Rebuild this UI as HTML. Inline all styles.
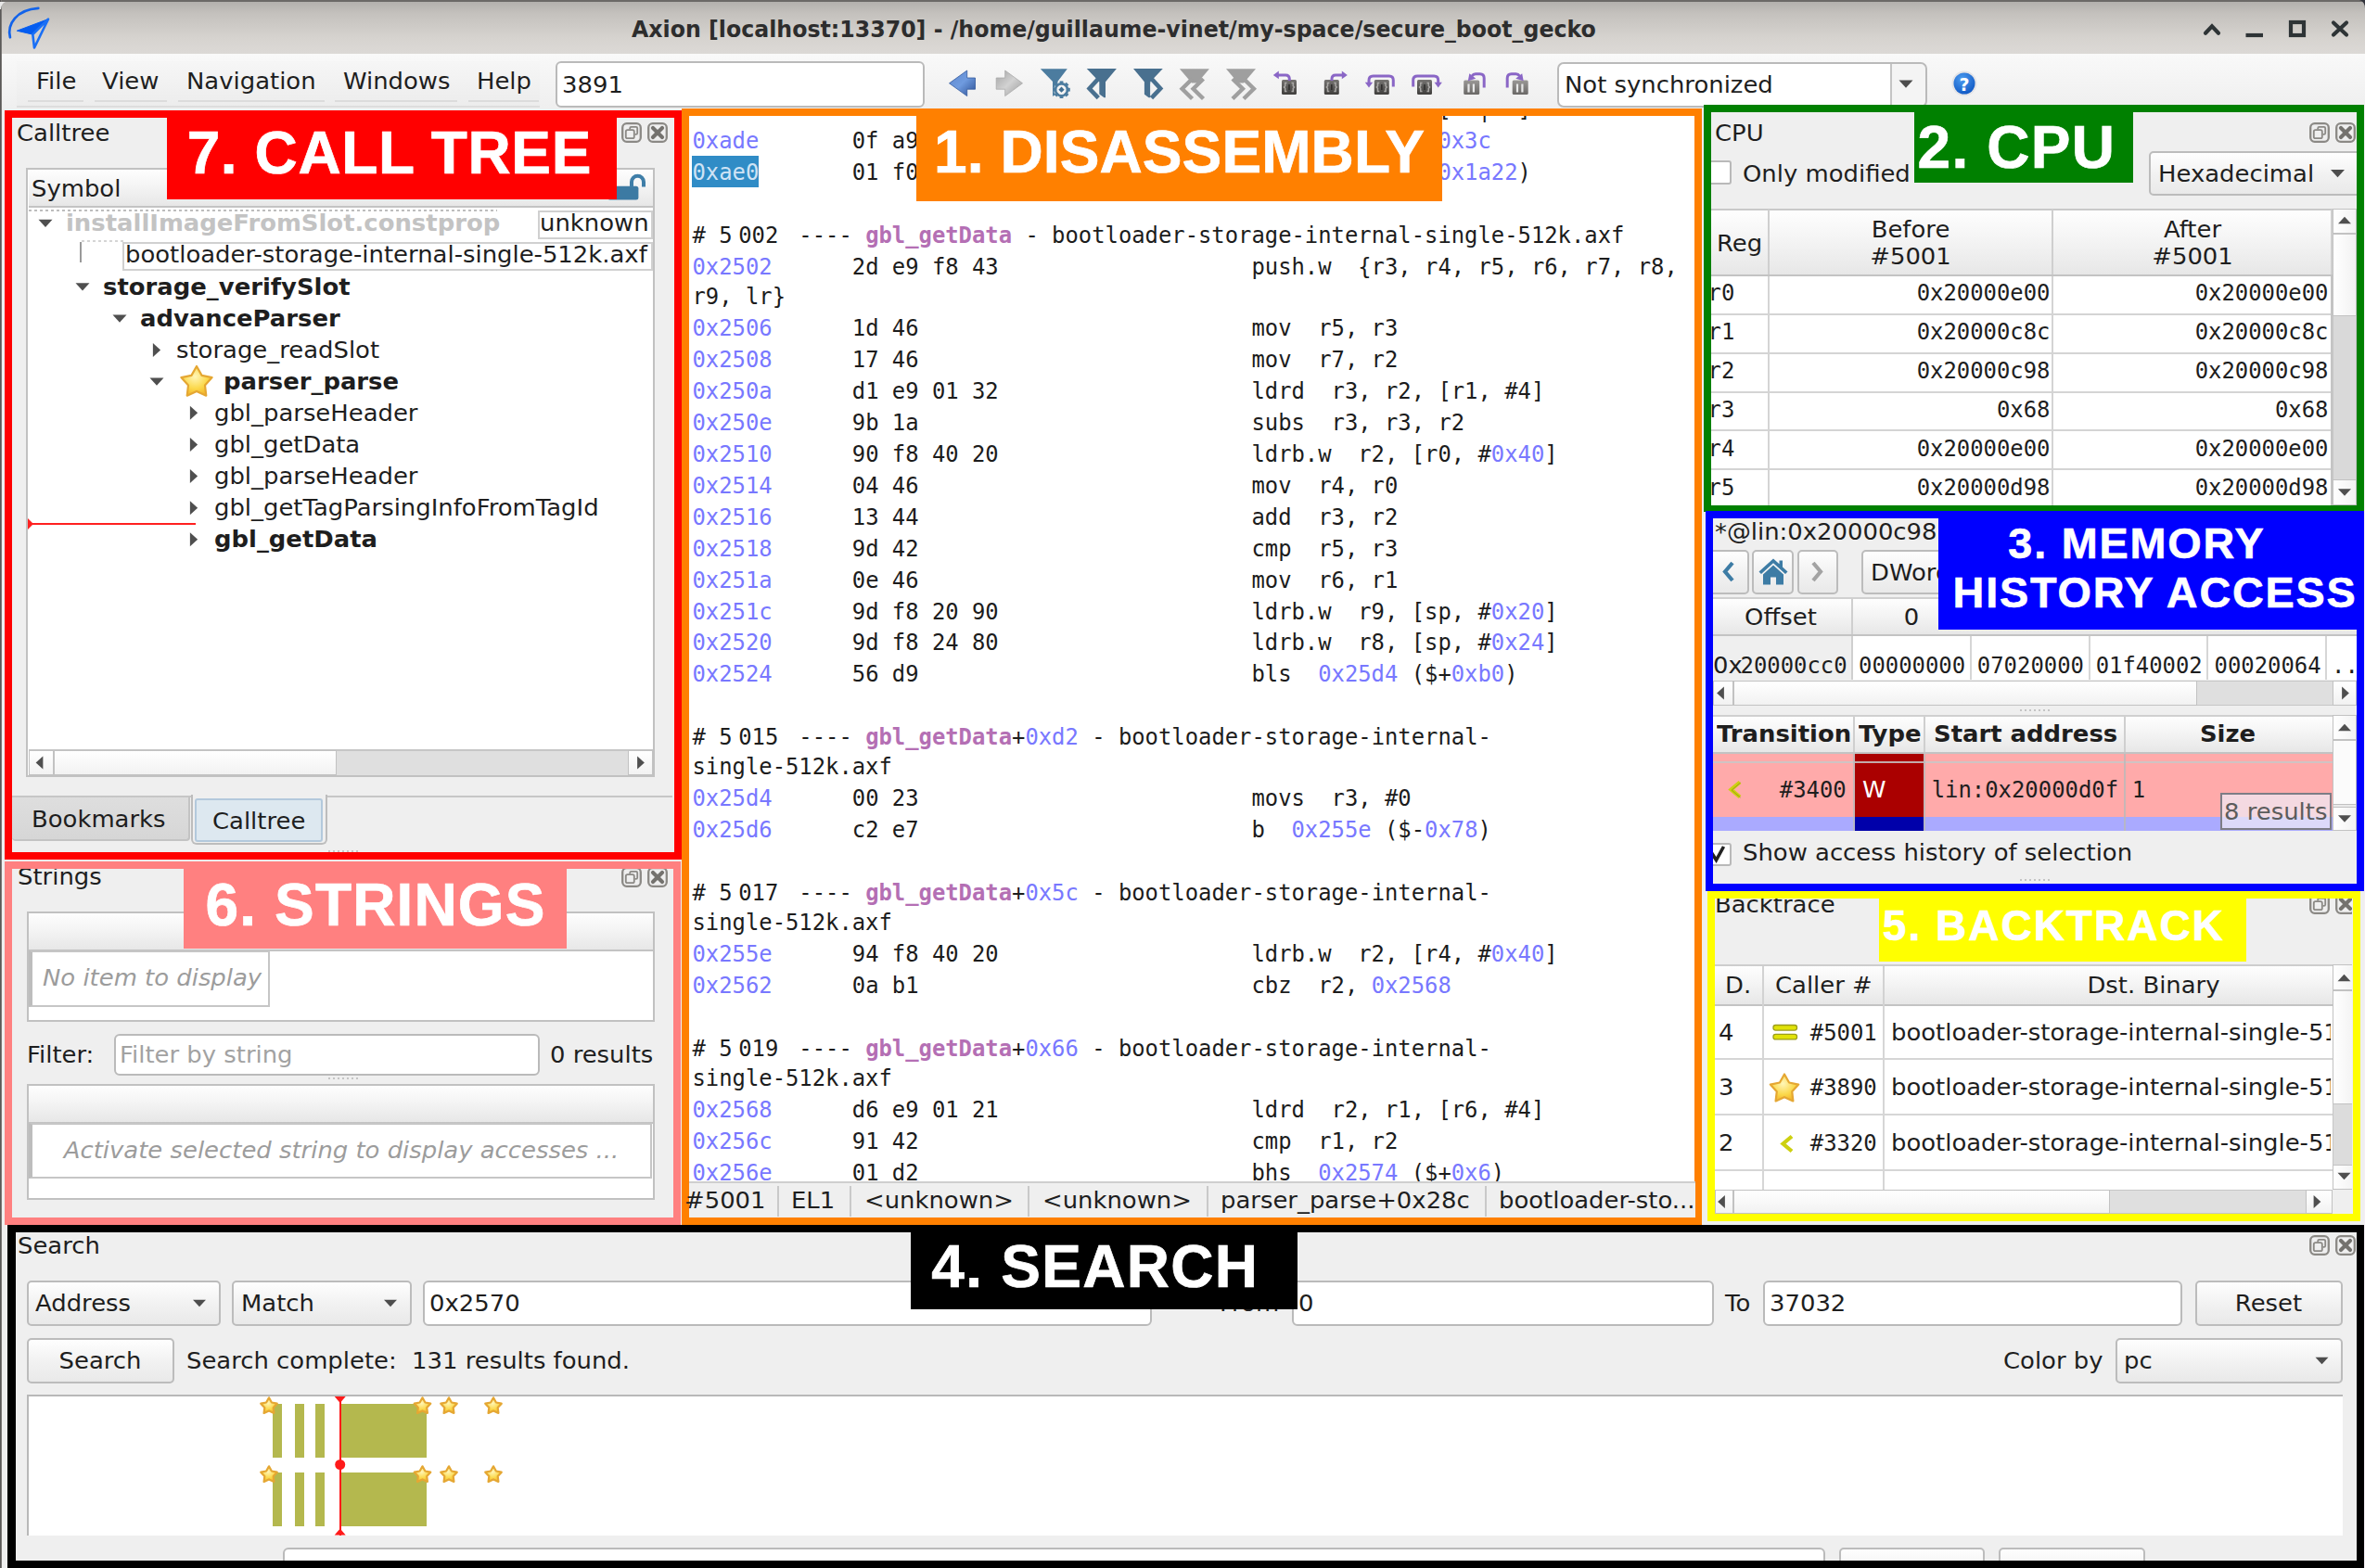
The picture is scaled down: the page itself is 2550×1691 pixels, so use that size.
<!DOCTYPE html><html><head><meta charset="utf-8"><title>Axion</title><style>
*{box-sizing:border-box;margin:0;padding:0}
html,body{width:2550px;height:1691px;overflow:hidden;background:#efefef}
body{position:relative;font-family:"DejaVu Sans","Liberation Sans",sans-serif;font-size:24px;color:#1e1e1e;line-height:1}
.a{position:absolute}
.t{position:absolute;white-space:pre;line-height:30px;height:30px;transform:scaleX(1.078);transform-origin:0 50%}
.t.r{transform-origin:100% 50%;text-align:right}
.t.c{transform-origin:50% 50%;text-align:center}
.m{font-family:"DejaVu Sans Mono","Liberation Mono",monospace;transform:scaleY(1.05);transform-origin:0 78%}
.b{font-weight:bold}
.i{font-style:italic}
.lbl{position:absolute;color:#fff;font-family:"Liberation Sans","DejaVu Sans",sans-serif;font-weight:bold;white-space:pre;text-align:center;overflow:hidden}
.lbl span{display:inline-block;transform-origin:50% 50%}
.hdr{position:absolute;background:linear-gradient(#fefefe,#f3f3f3 50%,#e7e7e7);border-bottom:2px solid #c3c3c3}
.btn{position:absolute;border:2px solid #bcbcbc;border-radius:5px;background:linear-gradient(#fefefe,#f1f1f1 55%,#e9e9e9)}
.inp{position:absolute;border:2px solid #bababa;border-radius:6px;background:#fff}
.frame{position:absolute;border:2px solid #c1c1c1;background:#fff}
.sbt{position:absolute;background:#dfdfdf;border:1px solid #c6c6c6}
.sbh{position:absolute;background:linear-gradient(#ffffff,#f2f2f2);border:1px solid #c2c2c2}
.sbv{position:absolute;background:linear-gradient(90deg,#ffffff,#f2f2f2);border:1px solid #c2c2c2}
.dk{position:absolute;width:22px;height:22px}
.clip{position:absolute;overflow:hidden}
.dis{position:absolute;left:746.5px;white-space:pre;transform:scaleY(1.05);transform-origin:0 25.11px;font-family:"DejaVu Sans Mono","Liberation Mono",monospace;font-size:23.85px;line-height:33.72px;height:33.72px;color:#1c1c1c}
.dis i{font-style:normal;color:#7878ff}
.dis u{text-decoration:none;color:#b46fb4;font-weight:bold}
.vl{position:absolute;width:2px;background:#d0d0d0}
.hl{position:absolute;height:2px;background:#d0d0d0}
</style></head><body>
<div class="a" style="left:0px;top:0px;width:2550px;height:58px;background:linear-gradient(#b0aeab,#c4c1bd 25%,#d6d3cf 70%,#dcd9d6);"></div>
<div class="a" style="left:0px;top:0px;width:2550px;height:2px;background:#6b6967"></div>
<div class="a" style="left:0px;top:0px;width:2px;height:1691px;background:linear-gradient(90deg,#4a4948,#8a8784)"></div>
<div class="a" style="left:2px;top:58px;width:2548px;height:58px;background:linear-gradient(#f9f9f9,#efefef)"></div>
<svg class="a" style="left:0px;top:0px" width="60" height="58" viewBox="0 0 60 58"><path d="M10.900 40.300 C7.500 26 17.500 10.500 41.300 8.900" fill="none" stroke="#1263ea" stroke-width="2.700" stroke-linecap="round"/><path d="M18.300 33.200 L52 20.600 L35.500 37.200 Z" fill="#045cf0" stroke="#045cf0" stroke-width="1" stroke-linejoin="round"/><path d="M52 20.600 L37 51.500 L35.300 37 Z" fill="#d4d1cd" stroke="#1a6ff5" stroke-width="2.600" stroke-linejoin="round"/></svg>
<div class="t b" style="left:681px;top:16.5px;color:#2d2d2d;transform:scaleX(0.986)">Axion [localhost:13370] - /home/guillaume-vinet/my-space/secure_boot_gecko</div>
<svg class="a" style="left:2370px;top:16px" width="170" height="30" viewBox="0 0 170 30"><g stroke="#2e3436" stroke-width="4.2" fill="none" stroke-linecap="round"><path d="M8 19.700 L15 12.300 L22 19.700"/><path d="M51.5 22 L70 22" stroke-linecap="butt"/><rect x="100" y="8" width="14" height="14" stroke-linecap="butt"/><path d="M146 8.500 L160 21.500 M160 8.500 L146 21.500"/></g></svg>
<svg class="a" style="left:2540px;top:0" width="10" height="12"><path d="M10 0 H4 Q10 2 10 9 Z" fill="#33343c"/></svg>
<svg class="a" style="left:0;top:0" width="10" height="12"><path d="M0 2 H6 Q1.5 3.500 1 10 H0 Z" fill="#e8e8e8"/><path d="M0 0 H8 V2 Q2.500 2.500 2 10 H0 Z" fill="none"/></svg>
<div class="a" style="left:2549px;top:112px;width:1px;height:1579px;background:#f4eef4"></div>
<div class="a" style="left:18px;top:66px;width:564px;height:50px;background:linear-gradient(#f6f6f6,#ececec)"></div>
<div class="t " style="left:38.5px;top:72.70px;font-size:24px;">File</div>
<div class="t " style="left:110px;top:72.70px;font-size:24px;">View</div>
<div class="t " style="left:200.5px;top:72.70px;font-size:24px;">Navigation</div>
<div class="t " style="left:369.5px;top:72.70px;font-size:24px;">Windows</div>
<div class="t " style="left:513.5px;top:72.70px;font-size:24px;">Help</div>
<div class="a" style="left:30px;top:108px;width:60px;height:2px;background:#dcdcdc"></div>
<div class="a" style="left:102px;top:108px;width:78px;height:2px;background:#dcdcdc"></div>
<div class="a" style="left:192px;top:108px;width:158px;height:2px;background:#dcdcdc"></div>
<div class="a" style="left:361px;top:108px;width:132px;height:2px;background:#dcdcdc"></div>
<div class="a" style="left:505px;top:108px;width:76px;height:2px;background:#dcdcdc"></div>
<div class="a" style="left:18px;top:114px;width:564px;height:2px;background:#dddddd"></div>
<div class="inp" style="left:599px;top:66px;width:398px;height:50px;"></div>
<div class="t " style="left:606px;top:77.20px;font-size:24px;">3891</div>
<svg class="a" style="left:1000px;top:60px" width="700" height="56" viewBox="1000 60 700 56"><defs><linearGradient id="gb" x1="0" y1="0" x2="1" y2="1"><stop offset="0" stop-color="#5f87cc"/><stop offset="0.5" stop-color="#6f9bdf"/><stop offset="1" stop-color="#2c4f93"/></linearGradient><linearGradient id="gg" x1="0" y1="0" x2="1" y2="1"><stop offset="0" stop-color="#a2a2a2"/><stop offset="0.5" stop-color="#d2d2d2"/><stop offset="1" stop-color="#9a9a9a"/></linearGradient><linearGradient id="gk" x1="0" y1="0" x2="0" y2="1"><stop offset="0" stop-color="#757371"/><stop offset="1" stop-color="#3f3e3c"/></linearGradient><linearGradient id="gl" x1="0" y1="0" x2="0" y2="1"><stop offset="0" stop-color="#9a9896"/><stop offset="1" stop-color="#6a6866"/></linearGradient></defs><path d="M1023.5 89.800 L1042.700 76 V84 H1051.500 V96.200 H1042.700 V103.600 Z" fill="url(#gb)" stroke="#345a9e" stroke-width="0.8"/><path d="M1102.500 89.800 L1083.700 76 V84 H1074.200 V96.200 H1083.700 V103.600 Z" fill="url(#gg)" stroke="#a9a9a9" stroke-width="0.8"/><path d="M1121.800 74.300 H1150.800 L1140.300 88 V94 H1135 V88 Z" fill="#4c7c9f"/><path d="M1135 88 h5.300 v12 l-5.300 4 Z" fill="#4c7c9f"/><circle cx="1144.500" cy="96.700" r="8.400" fill="#f3f3f3"/><rect x="-1.900" y="-9.300" width="3.800" height="4" transform="translate(1144.500 96.700) rotate(0)" fill="#4c7c9f"/><rect x="-1.900" y="-9.300" width="3.800" height="4" transform="translate(1144.500 96.700) rotate(45)" fill="#4c7c9f"/><rect x="-1.900" y="-9.300" width="3.800" height="4" transform="translate(1144.500 96.700) rotate(90)" fill="#4c7c9f"/><rect x="-1.900" y="-9.300" width="3.800" height="4" transform="translate(1144.500 96.700) rotate(135)" fill="#4c7c9f"/><rect x="-1.900" y="-9.300" width="3.800" height="4" transform="translate(1144.500 96.700) rotate(180)" fill="#4c7c9f"/><rect x="-1.900" y="-9.300" width="3.800" height="4" transform="translate(1144.500 96.700) rotate(225)" fill="#4c7c9f"/><rect x="-1.900" y="-9.300" width="3.800" height="4" transform="translate(1144.500 96.700) rotate(270)" fill="#4c7c9f"/><rect x="-1.900" y="-9.300" width="3.800" height="4" transform="translate(1144.500 96.700) rotate(315)" fill="#4c7c9f"/><circle cx="1144.500" cy="96.700" r="6.500" fill="none" stroke="#4c7c9f" stroke-width="2.600"/><rect x="1142.300" y="94.500" width="4.400" height="4.400" transform="rotate(45 1144.500 96.700)" fill="#3f6d90"/><path d="M1171.800 73.900 H1203.900 L1192 88.300 V105.200 H1190.500 L1185.300 101.500 V88.300 Z" fill="#49708f"/><path d="M1184.300 84.900 L1174.600 95.500 L1184.300 105.700" fill="none" stroke="#49708f" stroke-width="4.600"/><path d="M1222 73.900 H1253.800 L1240.300 88.300 V105.200 H1238.600 L1233.900 101.800 V88.300 Z" fill="#49708f"/><path d="M1241.500 84.900 L1251.200 95.500 L1241.500 105.700" fill="none" stroke="#49708f" stroke-width="4.600"/><path d="M1240.800 90 V103" stroke="#f1f1f1" stroke-width="0.9"/><path d="M1271.900 74.300 H1303.900 L1291 89.500 H1285 Z" fill="#9f9f9f"/><path d="M1285.500 85 L1274.600 95.800 L1285.500 106.500 M1297.500 85 L1286.600 95.800 L1297.500 106.500" fill="none" stroke="#9f9f9f" stroke-width="4.400"/><path d="M1322 74.300 H1354 L1341 89.500 H1335 Z" fill="#9f9f9f"/><path d="M1329 85 L1339.900 95.800 L1329 106.500 M1341 85 L1351.900 95.800 L1341 106.500" fill="none" stroke="#9f9f9f" stroke-width="4.400"/><rect x="1382" y="86" width="16" height="16" rx="1.5" fill="url(#gk)"/><path d="M1387.5 89.5 h-1.800 v3.200 l-1.200 1.300 l1.200 1.300 v3.200 h1.800 M1392.5 89.5 h1.800 v3.200 l1.200 1.300 l-1.200 1.300 v3.200 h-1.800" fill="none" stroke="#a9a7a5" stroke-width="1.500"/><rect x="1389.2" y="91" width="1.600" height="6" fill="#2f2e2d"/><path d="M1390.300 87 V85 Q1390.300 80.900 1386.200 80.900 H1378" fill="none" stroke="#8a66c6" stroke-width="3"/><path d="M1372.800 80.900 L1378.800 76.500 V85.300 Z" fill="#8a66c6"/><rect x="1427.8" y="86" width="16" height="16" rx="1.5" fill="url(#gk)"/><path d="M1433.3 89.5 h-1.800 v3.200 l-1.200 1.300 l1.200 1.300 v3.200 h1.800 M1438.3 89.5 h1.800 v3.200 l1.200 1.300 l-1.200 1.300 v3.200 h-1.800" fill="none" stroke="#a9a7a5" stroke-width="1.500"/><rect x="1435.0" y="91" width="1.600" height="6" fill="#2f2e2d"/><path d="M1436 87 V85 Q1436 80.900 1440.100 80.900 H1447.500" fill="none" stroke="#8a66c6" stroke-width="3"/><path d="M1452.800 80.900 L1446.800 76.500 V85.300 Z" fill="#8a66c6"/><rect x="1481.8" y="86" width="16" height="16" rx="1.5" fill="url(#gk)"/><path d="M1487.3 89.5 h-1.800 v3.200 l-1.200 1.300 l1.200 1.300 v3.200 h1.800 M1492.3 89.5 h1.800 v3.200 l1.200 1.300 l-1.200 1.300 v3.200 h-1.800" fill="none" stroke="#a9a7a5" stroke-width="1.500"/><rect x="1489.0" y="91" width="1.600" height="6" fill="#2f2e2d"/><path d="M1502.300 93.500 V86.500 Q1502.300 82 1497.800 82 H1480.500 Q1476 82 1476 86.500 V89" fill="none" stroke="#8a66c6" stroke-width="3"/><path d="M1476 94.500 L1471.800 88.700 H1480.200 Z" fill="#8a66c6"/><rect x="1528" y="86" width="16" height="16" rx="1.5" fill="url(#gk)"/><path d="M1533.5 89.5 h-1.800 v3.200 l-1.200 1.300 l1.200 1.300 v3.200 h1.800 M1538.5 89.5 h1.800 v3.200 l1.200 1.300 l-1.200 1.300 v3.200 h-1.800" fill="none" stroke="#a9a7a5" stroke-width="1.500"/><rect x="1535.2" y="91" width="1.600" height="6" fill="#2f2e2d"/><path d="M1523.700 93.500 V86.500 Q1523.700 82 1528.200 82 H1546.200 Q1550.700 82 1550.700 86.500 V89" fill="none" stroke="#8a66c6" stroke-width="3"/><path d="M1550.700 94.500 L1546.500 88.700 H1554.900 Z" fill="#8a66c6"/><rect x="1578.2" y="86.5" width="17" height="15.5" rx="1.5" fill="url(#gl)"/><rect x="1582.4" y="90.5" width="2.200" height="9" fill="#e8e8e8"/><rect x="1587.8" y="90.5" width="2.200" height="9" fill="#e8e8e8"/><path d="M1600.200 94.600 V84.300 Q1600.200 79.800 1595.700 79.800 H1591 Q1588.500 79.800 1587 82" fill="none" stroke="#8a66c6" stroke-width="3"/><path d="M1582.800 87.300 L1584.300 79.300 L1591.300 84.800 Z" fill="#8a66c6"/><rect x="1630.7" y="86.5" width="17" height="15.5" rx="1.5" fill="url(#gl)"/><rect x="1634.9" y="90.5" width="2.200" height="9" fill="#e8e8e8"/><rect x="1640.3" y="90.5" width="2.200" height="9" fill="#e8e8e8"/><path d="M1625.200 94.600 V84.300 Q1625.200 79.800 1629.700 79.800 H1634.500 Q1637 79.800 1638.500 82" fill="none" stroke="#8a66c6" stroke-width="3"/><path d="M1642.700 87.300 L1641.200 79.300 L1634.200 84.800 Z" fill="#8a66c6"/></svg>
<div class="inp" style="left:1678.5px;top:66.5px;width:399px;height:49px;border-radius:7px;background:linear-gradient(90deg,#fff 0,#fff 357px,#c4c4c4 357px,#c4c4c4 359px,#f4f4f4 359px)"></div>
<div class="t " style="left:1687px;top:76.70px;font-size:24px;">Not synchronized</div>
<svg class="a" style="left:0;top:0;overflow:visible" width="1" height="1"><polygon points="2047.5,86.375 2062.5,86.375 2055,94.625" fill="#4d4d4d"/></svg>
<svg class="a" style="left:2103px;top:75px" width="30" height="30" viewBox="0 0 30 30"><defs><radialGradient id="hg" cx="0.4" cy="0.3" r="0.8"><stop offset="0" stop-color="#4d9cf0"/><stop offset="1" stop-color="#0a52c0"/></radialGradient></defs><circle cx="15" cy="15" r="13.500" fill="#e3e3e6"/><circle cx="15" cy="15" r="11.500" fill="url(#hg)"/><text x="15" y="22.500" font-family="DejaVu Sans" font-weight="bold" font-size="19" fill="#fff" text-anchor="middle">?</text></svg>
<div class="a" style="left:5px;top:119px;width:730px;height:807.7px;border:8px solid #ff0000;background:#efefef"></div>
<div class="t " style="left:18px;top:128.70px;font-size:24px;">Calltree</div>
<svg class="a dk" style="left:670px;top:132px" width="22" height="22" viewBox="0 0 22 22"><rect x="1.2" y="1.2" width="19.600" height="19.600" rx="4.500" fill="#efefef" stroke="#8b8985" stroke-width="2.300"/><path d="M9.200 7.500 V6.200 Q9.200 4.800 10.600 4.800 H15.800 Q17.200 4.800 17.200 6.200 V11.400 Q17.200 12.800 15.800 12.800 H14.500" fill="none" stroke="#8b8985" stroke-width="1.800"/><rect x="4.800" y="8.200" width="9" height="9" rx="1.800" fill="none" stroke="#8b8985" stroke-width="1.800"/></svg>
<svg class="a dk" style="left:698px;top:132px" width="22" height="22" viewBox="0 0 22 22"><rect x="1.2" y="1.2" width="19.600" height="19.600" rx="4.500" fill="#efefef" stroke="#8b8985" stroke-width="2.300"/><path d="M6 6 L16 16 M16 6 L6 16" stroke="#74726e" stroke-width="4.200" stroke-linecap="round"/></svg>
<div class="frame" style="left:27.5px;top:180.5px;width:678.0px;height:657.0px;"></div>
<div class="hdr" style="left:30.5px;top:182.5px;width:673.0px;height:41.5px;"></div>
<div class="t " style="left:33.5px;top:188.70px;font-size:24px;">Symbol</div>
<svg class="a" style="left:650px;top:184px" width="52" height="36" viewBox="650 184 52 36"><rect x="655" y="200.700" width="33.400" height="14.700" rx="2.500" fill="#3c7aa3"/><path d="M681 202 V196.300 A6.500 6.500 0 0 1 694 196.300 V201.500" fill="none" stroke="#3f7ea8" stroke-width="4"/></svg>
<div class="a" style="left:30.5px;top:225.5px;width:505px;height:2px;background:repeating-linear-gradient(90deg,#bdbdbd 0 3px,#fff 3px 6px)"></div>
<svg class="a" style="left:0;top:0;overflow:visible" width="1" height="1"><polygon points="41.5,236.675 56.5,236.675 49,244.925" fill="#4f4f4f"/></svg>
<div class="t b" style="left:70.8px;top:226.00px;font-size:24px;color:#c3c3c3">installImageFromSlot.constprop</div>
<svg class="a" style="left:0;top:0;overflow:visible" width="1" height="1"><polygon points="81.5,305.175 96.5,305.175 89,313.425" fill="#4f4f4f"/></svg>
<div class="t b" style="left:110.6px;top:294.50px;font-size:24px;">storage_verifySlot</div>
<svg class="a" style="left:0;top:0;overflow:visible" width="1" height="1"><polygon points="121.5,339.375 136.5,339.375 129,347.625" fill="#4f4f4f"/></svg>
<div class="t b" style="left:150.5px;top:328.70px;font-size:24px;">advanceParser</div>
<svg class="a" style="left:0;top:0;overflow:visible" width="1" height="1"><polygon points="164.875,370.0 164.875,385.0 173.125,377.5" fill="#4f4f4f"/></svg>
<div class="t " style="left:190.4px;top:362.70px;font-size:24px;">storage_readSlot</div>
<svg class="a" style="left:0;top:0;overflow:visible" width="1" height="1"><polygon points="161.5,407.375 176.5,407.375 169,415.625" fill="#4f4f4f"/></svg>
<div class="t b" style="left:240.8px;top:396.70px;font-size:24px;">parser_parse</div>
<svg class="a" style="left:0;top:0;overflow:visible" width="1" height="1"><polygon points="204.875,437.8 204.875,452.8 213.125,445.3" fill="#4f4f4f"/></svg>
<div class="t " style="left:230.5px;top:430.50px;font-size:24px;">gbl_parseHeader</div>
<svg class="a" style="left:0;top:0;overflow:visible" width="1" height="1"><polygon points="204.875,471.9 204.875,486.9 213.125,479.4" fill="#4f4f4f"/></svg>
<div class="t " style="left:230.5px;top:464.60px;font-size:24px;">gbl_getData</div>
<svg class="a" style="left:0;top:0;overflow:visible" width="1" height="1"><polygon points="204.875,506.0 204.875,521.0 213.125,513.5" fill="#4f4f4f"/></svg>
<div class="t " style="left:230.5px;top:498.70px;font-size:24px;">gbl_parseHeader</div>
<svg class="a" style="left:0;top:0;overflow:visible" width="1" height="1"><polygon points="204.875,540.2 204.875,555.2 213.125,547.7" fill="#4f4f4f"/></svg>
<div class="t " style="left:230.5px;top:532.90px;font-size:24px;">gbl_getTagParsingInfoFromTagId</div>
<svg class="a" style="left:0;top:0;overflow:visible" width="1" height="1"><polygon points="204.875,574.3 204.875,589.3 213.125,581.8" fill="#4f4f4f"/></svg>
<div class="t b" style="left:230.5px;top:567.00px;font-size:24px;">gbl_getData</div>
<svg class="a" style="left:190px;top:390px" width="44" height="44" viewBox="190 390 44 44"><defs><radialGradient id="sg" cx="0.45" cy="0.35" r="0.75"><stop offset="0" stop-color="#fff6b8"/><stop offset="0.55" stop-color="#fbd84a"/><stop offset="1" stop-color="#f0a81f"/></radialGradient></defs><polygon points="212.00,395.00 217.55,404.85 228.64,407.09 220.99,415.42 222.29,426.66 212.00,421.95 201.71,426.66 203.01,415.42 195.36,407.09 206.45,404.85" fill="url(#sg)" stroke="#e5a733" stroke-width="2.200" stroke-linejoin="round"/></svg>
<div class="a" style="left:580px;top:227px;width:123.5px;height:30.5px;background:#fff;border:2px solid #d0d0d0"></div>
<div class="t " style="left:582px;top:226.00px;font-size:24px;">unknown</div>
<div class="a" style="left:132px;top:261px;width:571.5px;height:30.5px;background:#fff;border:2px solid #d0d0d0"></div>
<div class="t " style="left:135px;top:260.10px;font-size:24px;">bootloader-storage-internal-single-512k.axf</div>
<div class="a" style="left:86px;top:261px;width:2px;height:22px;background:#9a9a9a"></div>
<div class="a" style="left:88px;top:259px;width:46px;height:2px;background:repeating-linear-gradient(90deg,#d5d5d5 0 3px,#fff 3px 6px)"></div>
<div class="a" style="left:30.5px;top:564px;width:180px;height:2px;background:#ff2020"></div>
<svg class="a" style="left:30px;top:559px" width="8" height="12"><polygon points="0,0 6,6 0,12" fill="#ff2020"/></svg>
<div class="sbt" style="left:30.5px;top:808px;width:673.0px;height:28px;border-width:2px 0 0 0"></div>
<div class="sbh" style="left:30.5px;top:809px;width:27.0px;height:27px;"></div>
<div class="sbh" style="left:57.5px;top:809px;width:305.5px;height:27px;"></div>
<div class="sbh" style="left:677px;top:809px;width:26.5px;height:27px;"></div>
<svg class="a" style="left:0;top:0;overflow:visible" width="1" height="1"><polygon points="46.35,815.5 46.35,829.5 38.65,822.5" fill="#4f4f4f"/></svg>
<svg class="a" style="left:0;top:0;overflow:visible" width="1" height="1"><polygon points="687.15,815.5 687.15,829.5 694.85,822.5" fill="#4f4f4f"/></svg>
<div class="a" style="left:13px;top:858px;width:712px;height:2px;background:#c6c6c6"></div>
<div class="a" style="left:13px;top:859.5px;width:192px;height:47.5px;background:linear-gradient(#dedede,#d6d6d6);border:2px solid #c3c3c3;border-top:none;border-left:none;border-radius:0 0 4px 4px"></div>
<div class="a" style="left:206px;top:857px;width:146.5px;height:53.5px;background:#efefef;border:2px solid #bdbdbd;border-top:none;border-radius:0 0 6px 6px"></div>
<div class="a" style="left:210px;top:861px;width:137.5px;height:47px;background:#dde8f0;border:2px solid #b3c9dc;border-radius:3px"></div>
<div class="t " style="left:34px;top:869.00px;font-size:24px;">Bookmarks</div>
<div class="t " style="left:229px;top:870.70px;font-size:24px;">Calltree</div>
<div class="lbl" style="left:180px;top:127px;width:485px;height:88px;background:#ff0000;font-size:64px;line-height:77.05px;letter-spacing:0.6px;text-indent:-5.4px;-webkit-text-stroke:0.7px #fff">7. CALL TREE</div>
<div class="a" style="left:5px;top:929px;width:729px;height:391.5px;border:8px solid #ff8080;background:#efefef"></div>
<div class="clip" style="left:13.5px;top:936.5px;width:712px;height:60px">
<div class="t " style="left:5.5px;top:-5.60px;font-size:24px;">Strings</div>
</div>
<div class="clip" style="left:13.5px;top:936.5px;width:712px;height:60px">
<svg class="a dk" style="left:656.5px;top:-1.5px" width="22" height="22" viewBox="0 0 22 22"><rect x="1.2" y="1.2" width="19.600" height="19.600" rx="4.500" fill="#efefef" stroke="#8b8985" stroke-width="2.300"/><path d="M9.200 7.500 V6.200 Q9.200 4.800 10.600 4.800 H15.800 Q17.200 4.800 17.200 6.200 V11.400 Q17.200 12.800 15.800 12.800 H14.500" fill="none" stroke="#8b8985" stroke-width="1.800"/><rect x="4.800" y="8.200" width="9" height="9" rx="1.800" fill="none" stroke="#8b8985" stroke-width="1.800"/></svg>
<svg class="a dk" style="left:684.5px;top:-1.5px" width="22" height="22" viewBox="0 0 22 22"><rect x="1.2" y="1.2" width="19.600" height="19.600" rx="4.500" fill="#efefef" stroke="#8b8985" stroke-width="2.300"/><path d="M6 6 L16 16 M16 6 L6 16" stroke="#74726e" stroke-width="4.200" stroke-linecap="round"/></svg>
</div>
<div class="frame" style="left:28.5px;top:982.5px;width:677.0px;height:119.0px;"></div>
<div class="hdr" style="left:30.5px;top:984.5px;width:673.0px;height:41.5px;"></div>
<div class="a" style="left:30.8px;top:1024.5px;width:260.7px;height:61.0px;background:#fff;border:2px solid #c6c6c6;border-left:4px solid #bdbdbd"></div>
<div class="t i" style="left:45.5px;top:1039.70px;font-size:24px;color:#9c9c9c">No item to display</div>
<div class="t " style="left:28.5px;top:1122.70px;font-size:24px;">Filter:</div>
<div class="inp" style="left:122.5px;top:1114.5px;width:459.0px;height:45.0px;"></div>
<div class="t " style="left:128.5px;top:1122.70px;font-size:24px;color:#a2a2a2">Filter by string</div>
<div class="t  r" style="right:1845.3px;top:1122.70px;font-size:24px;">0 results</div>
<div class="frame" style="left:28.5px;top:1168.5px;width:677.0px;height:125.0px;"></div>
<div class="hdr" style="left:30.5px;top:1170.5px;width:673.0px;height:41.5px;"></div>
<div class="a" style="left:30.8px;top:1210.5px;width:672.7px;height:60.5px;background:#fff;border:2px solid #c6c6c6;border-left:4px solid #bdbdbd"></div>
<div class="t i c" style="left:-32.10000000000002px;width:800px;top:1225.90px;font-size:24px;color:#9c9c9c">Activate selected string to display accesses ...</div>
<div class="a" style="left:354px;top:1162px;width:32px;height:2px;background:repeating-linear-gradient(90deg,#c4c4c4 0 2px,transparent 2px 5px)"></div>
<div class="a" style="left:354px;top:916.5px;width:32px;height:2px;background:repeating-linear-gradient(90deg,#c4c4c4 0 2px,transparent 2px 5px)"></div>
<div class="lbl" style="left:198px;top:936.5px;width:413px;height:86.2px;background:#ff8080;font-size:64px;line-height:78.05px;letter-spacing:1.15px;text-indent:1.15px;-webkit-text-stroke:0.7px #fff">6. STRINGS</div>
<div class="a" style="left:735px;top:116.5px;width:1100px;height:1204.0px;border:8px solid #ff8000;background:#fff"></div>
<div class="clip" style="left:743.5px;top:124.5px;width:1084px;height:1151px">
<div class="a" style="left:2.3999999999999773px;top:43.599999999999994px;width:72.3px;height:33.7px;background:#308cc6"></div>
<div class="dis" style="left:3px;top:-22.61px">                                                        [  |  ]</div>
<div class="dis" style="left:3px;top:11.37px"><i>0xade</i>       0f a9                         add  r1, sp, #<i>0x3c</i></div>
<div class="dis" style="left:3px;top:45.34px"><span style="color:#cfe3f5">0xae0</span>       01 f0 9f ff                   bl  <i>0x2502</i> ($+<i>0x1a22</i>)</div>
<div class="dis" style="left:3px;top:113.29px"># 5<span style="display:inline-block;width:0.46ch"></span>002<span style="display:inline-block;width:1.54ch"></span>---- <u>gbl_getData</u> - bootloader-storage-internal-single-512k.axf</div>
<div class="dis" style="left:3px;top:147.26px"><i>0x2502</i>      2d e9 f8 43                   push.w  {r3, r4, r5, r6, r7, r8,</div>
<div class="dis" style="left:3px;top:179.26px">r9, lr}</div>
<div class="dis" style="left:3px;top:213.24px"><i>0x2506</i>      1d 46                         mov  r5, r3</div>
<div class="dis" style="left:3px;top:247.22px"><i>0x2508</i>      17 46                         mov  r7, r2</div>
<div class="dis" style="left:3px;top:281.19px"><i>0x250a</i>      d1 e9 01 32                   ldrd  r3, r2, [r1, #4]</div>
<div class="dis" style="left:3px;top:315.17px"><i>0x250e</i>      9b 1a                         subs  r3, r3, r2</div>
<div class="dis" style="left:3px;top:349.14px"><i>0x2510</i>      90 f8 40 20                   ldrb.w  r2, [r0, #<i>0x40</i>]</div>
<div class="dis" style="left:3px;top:383.12px"><i>0x2514</i>      04 46                         mov  r4, r0</div>
<div class="dis" style="left:3px;top:417.09px"><i>0x2516</i>      13 44                         add  r3, r2</div>
<div class="dis" style="left:3px;top:451.07px"><i>0x2518</i>      9d 42                         cmp  r5, r3</div>
<div class="dis" style="left:3px;top:485.04px"><i>0x251a</i>      0e 46                         mov  r6, r1</div>
<div class="dis" style="left:3px;top:519.02px"><i>0x251c</i>      9d f8 20 90                   ldrb.w  r9, [sp, #<i>0x20</i>]</div>
<div class="dis" style="left:3px;top:552.99px"><i>0x2520</i>      9d f8 24 80                   ldrb.w  r8, [sp, #<i>0x24</i>]</div>
<div class="dis" style="left:3px;top:586.97px"><i>0x2524</i>      56 d9                         bls  <i>0x25d4</i> ($+<i>0xb0</i>)</div>
<div class="dis" style="left:3px;top:654.92px"># 5<span style="display:inline-block;width:0.46ch"></span>015<span style="display:inline-block;width:1.54ch"></span>---- <u>gbl_getData</u>+<i>0xd2</i> - bootloader-storage-internal-</div>
<div class="dis" style="left:3px;top:686.92px">single-512k.axf</div>
<div class="dis" style="left:3px;top:720.89px"><i>0x25d4</i>      00 23                         movs  r3, #0</div>
<div class="dis" style="left:3px;top:754.87px"><i>0x25d6</i>      c2 e7                         b  <i>0x255e</i> ($-<i>0x78</i>)</div>
<div class="dis" style="left:3px;top:822.82px"># 5<span style="display:inline-block;width:0.46ch"></span>017<span style="display:inline-block;width:1.54ch"></span>---- <u>gbl_getData</u>+<i>0x5c</i> - bootloader-storage-internal-</div>
<div class="dis" style="left:3px;top:854.82px">single-512k.axf</div>
<div class="dis" style="left:3px;top:888.79px"><i>0x255e</i>      94 f8 40 20                   ldrb.w  r2, [r4, #<i>0x40</i>]</div>
<div class="dis" style="left:3px;top:922.77px"><i>0x2562</i>      0a b1                         cbz  r2, <i>0x2568</i></div>
<div class="dis" style="left:3px;top:990.72px"># 5<span style="display:inline-block;width:0.46ch"></span>019<span style="display:inline-block;width:1.54ch"></span>---- <u>gbl_getData</u>+<i>0x66</i> - bootloader-storage-internal-</div>
<div class="dis" style="left:3px;top:1022.72px">single-512k.axf</div>
<div class="dis" style="left:3px;top:1056.69px"><i>0x2568</i>      d6 e9 01 21                   ldrd  r2, r1, [r6, #4]</div>
<div class="dis" style="left:3px;top:1090.66px"><i>0x256c</i>      91 42                         cmp  r1, r2</div>
<div class="dis" style="left:3px;top:1124.64px"><i>0x256e</i>      01 d2                         bhs  <i>0x2574</i> ($+<i>0x6</i>)</div>
</div>
<div class="a" style="left:743px;top:1274px;width:1084.5px;height:38.5px;background:#efefef;border-top:2px solid #cfcfcf"></div>
<div class="t " style="left:737.5px;top:1280.20px;font-size:24px;">#5001</div>
<div class="t " style="left:853px;top:1280.20px;font-size:24px;">EL1</div>
<div class="t " style="left:931.5px;top:1280.20px;font-size:24px;">&lt;unknown&gt;</div>
<div class="t " style="left:1123.5px;top:1280.20px;font-size:24px;">&lt;unknown&gt;</div>
<div class="t " style="left:1316px;top:1280.20px;font-size:24px;">parser_parse+0x28c</div>
<div class="t " style="left:1616px;top:1280.20px;font-size:24px;">bootloader-sto...</div>
<div class="a" style="left:838px;top:1279px;width:2px;height:33px;background:#c9c9c9"></div>
<div class="a" style="left:916px;top:1279px;width:2px;height:33px;background:#c9c9c9"></div>
<div class="a" style="left:1108px;top:1279px;width:2px;height:33px;background:#c9c9c9"></div>
<div class="a" style="left:1300.5px;top:1279px;width:2px;height:33px;background:#c9c9c9"></div>
<div class="a" style="left:1600.5px;top:1279px;width:2px;height:33px;background:#c9c9c9"></div>
<div class="lbl" style="left:988px;top:124.5px;width:567px;height:92.3px;background:#ff8000;font-size:64px;line-height:79.05px;letter-spacing:0.1px;text-indent:0.1px;-webkit-text-stroke:0.7px #fff">1. DISASSEMBLY</div>
<div class="a" style="left:1837px;top:112.5px;width:712px;height:439.0px;border:8.500px solid #008000;border-right-width:8px;background:#efefef"></div>
<div class="clip" style="left:1845px;top:121px;width:696px;height:423.500px">
<div class="t " style="left:4px;top:7.70px;font-size:24px;">CPU</div>
<svg class="a dk" style="left:645px;top:11px" width="22" height="22" viewBox="0 0 22 22"><rect x="1.2" y="1.2" width="19.600" height="19.600" rx="4.500" fill="#efefef" stroke="#8b8985" stroke-width="2.300"/><path d="M9.200 7.500 V6.200 Q9.200 4.800 10.600 4.800 H15.800 Q17.200 4.800 17.200 6.200 V11.400 Q17.200 12.800 15.800 12.800 H14.500" fill="none" stroke="#8b8985" stroke-width="1.800"/><rect x="4.800" y="8.200" width="9" height="9" rx="1.800" fill="none" stroke="#8b8985" stroke-width="1.800"/></svg>
<svg class="a dk" style="left:673px;top:11px" width="22" height="22" viewBox="0 0 22 22"><rect x="1.2" y="1.2" width="19.600" height="19.600" rx="4.500" fill="#efefef" stroke="#8b8985" stroke-width="2.300"/><path d="M6 6 L16 16 M16 6 L6 16" stroke="#74726e" stroke-width="4.200" stroke-linecap="round"/></svg>
<div class="a" style="left:-4px;top:52px;width:26px;height:26px;background:#fff;border:2px solid #b9b9b9;border-radius:3px"></div>
<div class="t " style="left:33.700000000000045px;top:51.50px;font-size:24px;">Only modified</div>
<div class="btn" style="left:471.5px;top:42px;width:243.5px;height:48px;"></div>
<div class="t " style="left:481.8000000000002px;top:51.90px;font-size:24px;">Hexadecimal</div>
<div class="hdr" style="left:0px;top:103.5px;width:669.5px;height:73.5px;border-top:2px solid #c9c9c9"></div>
<div class="a" style="left:60.7px;top:105px;width:2.0px;height:70px;background:#cfcfcf"></div>
<div class="a" style="left:367px;top:105px;width:2px;height:70px;background:#cfcfcf"></div>
<div class="a" style="left:668.3px;top:105px;width:2.0px;height:70px;background:#cfcfcf"></div>
<div class="t " style="left:5.7000000000000455px;top:127.20px;font-size:24px;">Reg</div>
<div class="t  c" style="left:-85.0px;width:600px;top:111.50px;font-size:24px;">Before</div>
<div class="t  c" style="left:-85.0px;width:600px;top:141.30px;font-size:24px;">#5001</div>
<div class="t  c" style="left:218.5999999999999px;width:600px;top:111.50px;font-size:24px;">After</div>
<div class="t  c" style="left:218.5999999999999px;width:600px;top:141.30px;font-size:24px;">#5001</div>
<div class="a" style="left:0px;top:177px;width:669.5px;height:246.5px;background:#fff"></div>
<div class="t m" style="left:-3.5px;top:180.33px;font-size:23.9px;">r0</div>
<div class="t m r" style="right:330.5px;top:180.33px;font-size:23.9px;">0x20000e00</div>
<div class="t m r" style="right:30.5px;top:180.33px;font-size:23.9px;">0x20000e00</div>
<div class="a" style="left:0px;top:216.8px;width:669.5px;height:2.0px;background:#d4d4d4"></div>
<div class="t m" style="left:-3.5px;top:222.21px;font-size:23.9px;">r1</div>
<div class="t m r" style="right:330.5px;top:222.21px;font-size:23.9px;">0x20000c8c</div>
<div class="t m r" style="right:30.5px;top:222.21px;font-size:23.9px;">0x20000c8c</div>
<div class="a" style="left:0px;top:258.68px;width:669.5px;height:2.0px;background:#d4d4d4"></div>
<div class="t m" style="left:-3.5px;top:264.09px;font-size:23.9px;">r2</div>
<div class="t m r" style="right:330.5px;top:264.09px;font-size:23.9px;">0x20000c98</div>
<div class="t m r" style="right:30.5px;top:264.09px;font-size:23.9px;">0x20000c98</div>
<div class="a" style="left:0px;top:300.56px;width:669.5px;height:2.0px;background:#d4d4d4"></div>
<div class="t m" style="left:-3.5px;top:305.97px;font-size:23.9px;">r3</div>
<div class="t m r" style="right:330.5px;top:305.97px;font-size:23.9px;">0x68</div>
<div class="t m r" style="right:30.5px;top:305.97px;font-size:23.9px;">0x68</div>
<div class="a" style="left:0px;top:342.44px;width:669.5px;height:2.0px;background:#d4d4d4"></div>
<div class="t m" style="left:-3.5px;top:347.85px;font-size:23.9px;">r4</div>
<div class="t m r" style="right:330.5px;top:347.85px;font-size:23.9px;">0x20000e00</div>
<div class="t m r" style="right:30.5px;top:347.85px;font-size:23.9px;">0x20000e00</div>
<div class="a" style="left:0px;top:384.32px;width:669.5px;height:2.0px;background:#d4d4d4"></div>
<div class="t m" style="left:-3.5px;top:389.73px;font-size:23.9px;">r5</div>
<div class="t m r" style="right:330.5px;top:389.73px;font-size:23.9px;">0x20000d98</div>
<div class="t m r" style="right:30.5px;top:389.73px;font-size:23.9px;">0x20000d98</div>
<div class="a" style="left:0px;top:426.2px;width:669.5px;height:2.0px;background:#d4d4d4"></div>
<div class="a" style="left:60.7px;top:177px;width:2.0px;height:246.5px;background:#d4d4d4"></div>
<div class="a" style="left:367px;top:177px;width:2px;height:246.5px;background:#d4d4d4"></div>
<div class="a" style="left:667.5px;top:177px;width:2.0px;height:246.5px;background:#c4c4c4"></div>
<div class="sbt" style="left:669.5px;top:103.5px;width:26.5px;height:320.0px;background:#d9d9d9"></div>
<div class="sbv" style="left:669.5px;top:103.5px;width:26.5px;height:27.5px;"></div>
<div class="sbv" style="left:669.5px;top:131px;width:26.5px;height:88.5px;"></div>
<div class="sbv" style="left:669.5px;top:396px;width:26.5px;height:27.5px;"></div>
</div>
<svg class="a" style="left:0;top:0;overflow:visible" width="1" height="1"><polygon points="2513.0,182.875 2528.0,182.875 2520.5,191.125" fill="#4d4d4d"/></svg>
<svg class="a" style="left:0;top:0;overflow:visible" width="1" height="1"><polygon points="2521,241.35 2535,241.35 2528,233.65" fill="#4f4f4f"/></svg>
<svg class="a" style="left:0;top:0;overflow:visible" width="1" height="1"><polygon points="2521,527.15 2535,527.15 2528,534.85" fill="#4f4f4f"/></svg>
<div class="lbl" style="left:2063.8px;top:121px;width:235.9px;height:75.8px;background:#008000;font-size:64px;line-height:76.85px;letter-spacing:1.2px;text-indent:-14.8px;-webkit-text-stroke:0.7px #fff">2. CPU</div>
<div class="a" style="left:1838.5px;top:550.5px;width:710.5px;height:410.5px;border:8.500px solid #0000ff;border-right-width:8px;background:#efefef"></div>
<div class="clip" style="left:1847px;top:559px;width:694px;height:394px">
<div class="t " style="left:1.5px;top:-0.10px;font-size:24px;">*@lin:0x20000c98</div>
<div class="btn" style="left:-6px;top:33.5px;width:44.7px;height:48.0px;"></div>
<div class="btn" style="left:42.4px;top:33.5px;width:45.0px;height:48.0px;"></div>
<div class="btn" style="left:91px;top:33.5px;width:44px;height:48.0px;"></div>
<svg class="a" style="left:0;top:0;overflow:visible" width="1" height="1"><path d="M21 48 l-8 9.500 l8 9.500" fill="none" stroke="#3d7ca5" stroke-width="4.200"/><path d="M108 48 l8 9.500 l-8 9.500" fill="none" stroke="#a3a3a3" stroke-width="4.200"/><g transform="translate(49 42)" fill="#3d7ca5"><path d="M16 1.500 L0.500 15.500 L3 18 L16 6.200 L29 18 L31.500 15.500 L26 10.500 V3.500 H22.500 V7.300 Z"/><path d="M16 8.500 L5 18.500 V29.500 H13 V21.500 H19 V29.500 H27 V18.500 Z"/></g></svg>
<div class="btn" style="left:159.6px;top:33.5px;width:193.4px;height:48.0px;"></div>
<div class="t " style="left:169.5999999999999px;top:44.10px;font-size:24px;">DWord</div>
<div class="hdr" style="left:0px;top:84.5px;width:694px;height:42.0px;border-top:2px solid #d0d0d0"></div>
<div class="t  c" style="left:-227.20000000000005px;width:600px;top:91.50px;font-size:24px;">Offset</div>
<div class="t  c" style="left:-85.59999999999991px;width:600px;top:91.50px;font-size:24px;">0</div>
<div class="a" style="left:148.8px;top:86px;width:2.0px;height:39px;background:#cfcfcf"></div>
<div class="a" style="left:150.8px;top:126.5px;width:543.2px;height:47.5px;background:#fff"></div>
<div class="a" style="left:276.7px;top:126.5px;width:2.0px;height:47.5px;background:#d6d6d6"></div>
<div class="a" style="left:404.5px;top:126.5px;width:2.0px;height:47.5px;background:#d6d6d6"></div>
<div class="a" style="left:532.4px;top:126.5px;width:2.0px;height:47.5px;background:#d6d6d6"></div>
<div class="a" style="left:660.2px;top:126.5px;width:2.0px;height:47.5px;background:#d6d6d6"></div>
<div class="a" style="left:148.8px;top:126.5px;width:2.0px;height:47.5px;background:#cfcfcf"></div>
<div class="t " style="left:-0.5px;top:143.60px;font-size:24px;">0x</div>
<div class="t m" style="left:29.5px;top:143.63px;font-size:23.9px;">20000cc0</div>
<div class="t m" style="left:157.0px;top:143.63px;font-size:23.9px;">00000000</div>
<div class="t m" style="left:284.8499999999999px;top:143.63px;font-size:23.9px;">07020000</div>
<div class="t m" style="left:412.6999999999998px;top:143.63px;font-size:23.9px;">01f40002</div>
<div class="t m" style="left:540.5500000000002px;top:143.63px;font-size:23.9px;">00020064</div>
<div class="t m" style="left:667px;top:143.63px;font-size:23.9px;">..</div>
<div class="sbt" style="left:0px;top:174.5px;width:694px;height:27.5px;"></div>
<div class="sbh" style="left:0px;top:174.5px;width:22px;height:27.5px;"></div>
<div class="sbh" style="left:22px;top:174.5px;width:500px;height:27.5px;"></div>
<div class="sbh" style="left:668px;top:174.5px;width:26px;height:27.5px;"></div>
<div class="a" style="left:331px;top:205.5px;width:32px;height:2.0px;background:repeating-linear-gradient(90deg,#c4c4c4 0 2px,transparent 2px 5px)"></div>
<div class="hdr" style="left:0px;top:212px;width:667.5px;height:42px;border-top:2px solid #d0d0d0"></div>
<div class="a" style="left:151px;top:214px;width:2px;height:38px;background:#cfcfcf"></div>
<div class="a" style="left:227px;top:214px;width:2px;height:38px;background:#cfcfcf"></div>
<div class="a" style="left:442.6px;top:214px;width:2.0px;height:38px;background:#cfcfcf"></div>
<div class="t b" style="left:3.7000000000000455px;top:218.20px;font-size:24px;">Transition</div>
<div class="t b" style="left:157px;top:218.20px;font-size:24px;">Type</div>
<div class="t b" style="left:238px;top:218.20px;font-size:24px;">Start address</div>
<div class="t b c" style="left:255.0px;width:600px;top:218.20px;font-size:24px;">Size</div>
<div class="a" style="left:0px;top:254px;width:667.5px;height:83px;background:#ffaaaa"></div>
<div class="a" style="left:0px;top:321.5px;width:667.5px;height:15.5px;background:#aaaaff"></div>
<div class="a" style="left:153px;top:254px;width:74px;height:67.5px;background:#aa0000"></div>
<div class="a" style="left:153px;top:321.5px;width:74px;height:15.5px;background:#0000aa"></div>
<div class="a" style="left:0px;top:262px;width:667.5px;height:2px;background:rgba(200,200,200,0.85)"></div>
<div class="a" style="left:151px;top:254px;width:2px;height:83px;background:rgba(185,185,185,0.8)"></div>
<div class="a" style="left:227px;top:254px;width:2px;height:83px;background:rgba(185,185,185,0.8)"></div>
<div class="a" style="left:442.6px;top:254px;width:2.0px;height:83px;background:rgba(185,185,185,0.8)"></div>
<svg class="a" style="left:0;top:0;overflow:visible" width="1" height="1"><path d="M29 284.5 l-9.500 8 l9.500 8" fill="none" stroke="#cdd010" stroke-width="4.200"/><path d="M29 284.5 l-9.500 8 l9.500 8" fill="none" stroke="#8f9210" stroke-width="0.8" transform="translate(0.6 0.6)"/></svg>
<div class="t m r" style="right:550.3px;top:277.93px;font-size:23.9px;">#3400</div>
<div class="t " style="left:160.5px;top:277.90px;font-size:24px;color:#fff">W</div>
<div class="t m" style="left:235.69999999999982px;top:277.93px;font-size:23.9px;">lin:0x20000d0f</div>
<div class="t m" style="left:451.8000000000002px;top:277.93px;font-size:23.9px;">1</div>
<div class="a" style="left:547px;top:296px;width:119.5px;height:40px;background:rgba(240,236,246,0.72);border:2px solid #7d7d86"></div>
<div class="t " style="left:550.6999999999998px;top:301.70px;font-size:24px;color:#5c5c5c">8 results</div>
<div class="sbt" style="left:667.5px;top:212px;width:26.5px;height:125px;background:#e9e9e9"></div>
<div class="sbv" style="left:667.5px;top:212px;width:26.5px;height:27px;"></div>
<div class="sbv" style="left:667.5px;top:239px;width:26.5px;height:70px;background:#fbfbfb"></div>
<div class="sbv" style="left:667.5px;top:311px;width:26.5px;height:26px;"></div>
<div class="a" style="left:-6px;top:349.5px;width:26px;height:25.5px;background:#fff;border:2px solid #b9b9b9;border-radius:3px"></div>
<svg class="a" style="left:0;top:0;overflow:visible" width="1" height="1"><path d="M-2 360 l5.500 8.500 l8 -14.500" fill="none" stroke="#222" stroke-width="3.600"/></svg>
<div class="t " style="left:31.700000000000045px;top:345.90px;font-size:24px;">Show access history of selection</div>
<div class="a" style="left:331px;top:389px;width:32px;height:2px;background:repeating-linear-gradient(90deg,#c4c4c4 0 2px,transparent 2px 5px)"></div>
</div>
<svg class="a" style="left:0;top:0;overflow:visible" width="1" height="1"><polygon points="2521,788.35 2535,788.35 2528,780.65" fill="#4f4f4f"/></svg>
<svg class="a" style="left:0;top:0;overflow:visible" width="1" height="1"><polygon points="2521,879.15 2535,879.15 2528,886.85" fill="#4f4f4f"/></svg>
<svg class="a" style="left:0;top:0;overflow:visible" width="1" height="1"><polygon points="1858.85,740.5 1858.85,754.5 1851.15,747.5" fill="#4f4f4f"/></svg>
<svg class="a" style="left:0;top:0;overflow:visible" width="1" height="1"><polygon points="2525.15,740.5 2525.15,754.5 2532.85,747.5" fill="#4f4f4f"/></svg>
<div class="a" style="left:2089.7px;top:558px;width:453px;height:121px;background:#0000ff"></div>
<div class="lbl" style="left:1903px;top:556.18px;width:800px;height:60px;font-size:46.8px;line-height:60px;letter-spacing:1.8px;text-indent:1.8px;-webkit-text-stroke:0.6px #fff">3. MEMORY</div>
<div class="lbl" style="left:1922.6999999999998px;top:609.48px;width:800px;height:60px;font-size:46.8px;line-height:60px;letter-spacing:1.8px;text-indent:1.8px;-webkit-text-stroke:0.6px #fff">HISTORY ACCESS</div>
<div class="a" style="left:1840.5px;top:960.5px;width:704.0px;height:356.5px;border:8.500px solid #ffff00;background:#efefef"></div>
<div class="clip" style="left:1849px;top:969px;width:687px;height:339.500px">
<div class="t " style="left:0px;top:-7.60px;font-size:24px;">Backtrace</div>
<svg class="a dk" style="left:641px;top:-5px" width="22" height="22" viewBox="0 0 22 22"><rect x="1.2" y="1.2" width="19.600" height="19.600" rx="4.500" fill="#efefef" stroke="#8b8985" stroke-width="2.300"/><path d="M9.200 7.500 V6.200 Q9.200 4.800 10.600 4.800 H15.800 Q17.200 4.800 17.200 6.200 V11.400 Q17.200 12.800 15.800 12.800 H14.500" fill="none" stroke="#8b8985" stroke-width="1.800"/><rect x="4.800" y="8.200" width="9" height="9" rx="1.800" fill="none" stroke="#8b8985" stroke-width="1.800"/></svg>
<svg class="a dk" style="left:669px;top:-5px" width="22" height="22" viewBox="0 0 22 22"><rect x="1.2" y="1.2" width="19.600" height="19.600" rx="4.500" fill="#efefef" stroke="#8b8985" stroke-width="2.300"/><path d="M6 6 L16 16 M16 6 L6 16" stroke="#74726e" stroke-width="4.200" stroke-linecap="round"/></svg>
<div class="hdr" style="left:0px;top:70.5px;width:666px;height:45.0px;border-top:2px solid #cdcdcd"></div>
<div class="a" style="left:51px;top:72.5px;width:2px;height:241.5px;background:#d2d2d2"></div>
<div class="a" style="left:181px;top:72.5px;width:2px;height:241.5px;background:#d2d2d2"></div>
<div class="t " style="left:11.400000000000091px;top:79.40px;font-size:24px;">D.</div>
<div class="t " style="left:65.29999999999995px;top:79.40px;font-size:24px;">Caller #</div>
<div class="t  c" style="left:172.5999999999999px;width:600px;top:79.40px;font-size:24px;">Dst. Binary</div>
<div class="a" style="left:0px;top:115.5px;width:666px;height:198.5px;background:#fff"></div>
<div class="a" style="left:51px;top:115.5px;width:2px;height:198.5px;background:#d6d6d6"></div>
<div class="a" style="left:181px;top:115.5px;width:2px;height:198.5px;background:#d6d6d6"></div>
<div class="a" style="left:0px;top:171.8px;width:666px;height:2.0px;background:#d6d6d6"></div>
<div class="a" style="left:0px;top:231.8px;width:666px;height:2.0px;background:#d6d6d6"></div>
<div class="a" style="left:0px;top:292px;width:666px;height:2px;background:#d6d6d6"></div>
<div class="t " style="left:3.7999999999999545px;top:129.60px;font-size:24px;">4</div>
<div class="t m" style="left:102.79999999999995px;top:129.63px;font-size:23.9px;">#5001</div>
<div class="clip" style="left:184px;top:122.90000000000009px;width:480px;height:44px">
<div class="t" style="left:5.500px;top:6.70px">bootloader-storage-internal-single-512k.axf</div>
</div>
<div class="t " style="left:3.7999999999999545px;top:189.30px;font-size:24px;">3</div>
<div class="t m" style="left:102.79999999999995px;top:189.33px;font-size:23.9px;">#3890</div>
<div class="clip" style="left:184px;top:182.5999999999999px;width:480px;height:44px">
<div class="t" style="left:5.500px;top:6.70px">bootloader-storage-internal-single-512k.axf</div>
</div>
<div class="t " style="left:3.7999999999999545px;top:249.30px;font-size:24px;">2</div>
<div class="t m" style="left:102.79999999999995px;top:249.33px;font-size:23.9px;">#3320</div>
<div class="clip" style="left:184px;top:242.5999999999999px;width:480px;height:44px">
<div class="t" style="left:5.500px;top:6.70px">bootloader-storage-internal-single-512k.axf</div>
</div>
<svg class="a" style="left:0;top:0;overflow:visible" width="1" height="1"><rect x="63" y="136.5" width="25.500" height="5.600" rx="2.500" fill="#e0e208" stroke="#9b9d1a" stroke-width="1.300"/><rect x="63" y="146.29999999999995" width="25.500" height="5.600" rx="2.500" fill="#e0e208" stroke="#9b9d1a" stroke-width="1.300"/><polygon points="75.00,189.50 80.08,198.51 90.22,200.56 83.22,208.17 84.40,218.44 75.00,214.14 65.60,218.44 66.78,208.17 59.78,200.56 69.92,198.51" fill="url(#sg)" stroke="#e5a733" stroke-width="2.200" stroke-linejoin="round"/><path d="M83 256.5 l-9.500 8 l9.500 8" fill="none" stroke="#cdd010" stroke-width="4.200"/></svg>
<div class="sbt" style="left:666px;top:70.5px;width:26px;height:243.5px;background:#dcdcdc"></div>
<div class="sbv" style="left:666px;top:70.5px;width:26px;height:28.5px;"></div>
<div class="sbv" style="left:666px;top:99px;width:26px;height:123px;"></div>
<div class="sbv" style="left:666px;top:287px;width:26px;height:27px;"></div>
<div class="sbt" style="left:0px;top:314px;width:692px;height:26px;"></div>
<div class="sbh" style="left:0px;top:314px;width:20px;height:26px;"></div>
<div class="sbh" style="left:20px;top:314px;width:405.5px;height:26px;"></div>
<div class="sbh" style="left:637px;top:314px;width:29px;height:26px;"></div>
<div class="a" style="left:666px;top:314px;width:26px;height:26px;background:#efefef"></div>
</div>
<svg class="a" style="left:0;top:0;overflow:visible" width="1" height="1"><polygon points="2520.5,1058.35 2534.5,1058.35 2527.5,1050.65" fill="#4f4f4f"/></svg>
<svg class="a" style="left:0;top:0;overflow:visible" width="1" height="1"><polygon points="2520.5,1264.65 2534.5,1264.65 2527.5,1272.35" fill="#4f4f4f"/></svg>
<svg class="a" style="left:0;top:0;overflow:visible" width="1" height="1"><polygon points="1859.85,1289 1859.85,1303 1852.15,1296" fill="#4f4f4f"/></svg>
<svg class="a" style="left:0;top:0;overflow:visible" width="1" height="1"><polygon points="2494.65,1289 2494.65,1303 2502.35,1296" fill="#4f4f4f"/></svg>
<div class="lbl" style="left:2025.7px;top:969px;width:396.3px;height:67.8px;background:#ffff00;font-size:46px;line-height:58.12px;letter-spacing:2px;text-indent:-19.0px;-webkit-text-stroke:0.7px #fff">5. BACKTRACK</div>
<div class="a" style="left:8px;top:1321px;width:2541px;height:370px;border:8px solid #000;border-left-width:9px;border-bottom-width:8.5px;background:#efefef;overflow:hidden"></div>
<div class="t " style="left:19px;top:1328.90px;font-size:24px;">Search</div>
<svg class="a dk" style="left:2489.5px;top:1332px" width="22" height="22" viewBox="0 0 22 22"><rect x="1.2" y="1.2" width="19.600" height="19.600" rx="4.500" fill="#efefef" stroke="#8b8985" stroke-width="2.300"/><path d="M9.200 7.500 V6.200 Q9.200 4.800 10.600 4.800 H15.800 Q17.200 4.800 17.200 6.200 V11.400 Q17.200 12.800 15.800 12.800 H14.500" fill="none" stroke="#8b8985" stroke-width="1.800"/><rect x="4.800" y="8.200" width="9" height="9" rx="1.800" fill="none" stroke="#8b8985" stroke-width="1.800"/></svg>
<svg class="a dk" style="left:2517.5px;top:1332px" width="22" height="22" viewBox="0 0 22 22"><rect x="1.2" y="1.2" width="19.600" height="19.600" rx="4.500" fill="#efefef" stroke="#8b8985" stroke-width="2.300"/><path d="M6 6 L16 16 M16 6 L6 16" stroke="#74726e" stroke-width="4.200" stroke-linecap="round"/></svg>
<div class="btn" style="left:28.5px;top:1380.5px;width:209.0px;height:49.0px;"></div>
<div class="t " style="left:38.0px;top:1390.50px;font-size:24px;">Address</div>
<svg class="a" style="left:0;top:0;overflow:visible" width="1" height="1"><polygon points="208.0,1401.65 222.0,1401.65 215.0,1409.35" fill="#4d4d4d"/></svg>
<div class="btn" style="left:250px;top:1380.5px;width:193.5px;height:49.0px;"></div>
<div class="t " style="left:259.5px;top:1390.50px;font-size:24px;">Match</div>
<svg class="a" style="left:0;top:0;overflow:visible" width="1" height="1"><polygon points="414.0,1401.65 428.0,1401.65 421.0,1409.35" fill="#4d4d4d"/></svg>
<div class="inp" style="left:456px;top:1380.5px;width:785.5px;height:49.0px;"></div>
<div class="t " style="left:463px;top:1390.50px;font-size:24px;">0x2570</div>
<div class="t " style="left:1315px;top:1390.50px;font-size:24px;">From</div>
<div class="inp" style="left:1392.5px;top:1380.5px;width:455.0px;height:49.0px;"></div>
<div class="t " style="left:1400px;top:1390.50px;font-size:24px;">0</div>
<div class="t " style="left:1860px;top:1390.50px;font-size:24px;">To</div>
<div class="inp" style="left:1900.5px;top:1380.5px;width:452.5px;height:49.0px;"></div>
<div class="t " style="left:1907.5px;top:1390.50px;font-size:24px;">37032</div>
<div class="btn" style="left:2366.5px;top:1380.5px;width:159.5px;height:49.0px;"></div>
<div class="t  c" style="left:2046.3000000000002px;width:800px;top:1390.50px;font-size:24px;">Reset</div>
<div class="btn" style="left:28.5px;top:1442.5px;width:159.0px;height:49.0px;"></div>
<div class="t  c" style="left:-292.0px;width:800px;top:1452.50px;font-size:24px;">Search</div>
<div class="t " style="left:200.5px;top:1452.50px;font-size:24px;">Search complete:  131 results found.</div>
<div class="t " style="left:2160px;top:1452.50px;font-size:24px;">Color by</div>
<div class="btn" style="left:2280.5px;top:1442.5px;width:245.5px;height:49.0px;"></div>
<div class="t " style="left:2290.0px;top:1452.50px;font-size:24px;">pc</div>
<svg class="a" style="left:0;top:0;overflow:visible" width="1" height="1"><polygon points="2496.5,1463.65 2510.5,1463.65 2503.5,1471.35" fill="#4d4d4d"/></svg>
<div class="a" style="left:28.5px;top:1504px;width:2497.5px;height:151.5px;background:#fff;border-top:2px solid #b8b8b8;border-left:2px solid #b8b8b8"></div>
<div class="a" style="left:294px;top:1513.8px;width:10px;height:58.2px;background:#b4b84e"></div>
<div class="a" style="left:318px;top:1513.8px;width:10px;height:58.2px;background:#b4b84e"></div>
<div class="a" style="left:340px;top:1513.8px;width:10px;height:58.2px;background:#b4b84e"></div>
<div class="a" style="left:368px;top:1513.8px;width:92px;height:58.2px;background:#b4b84e"></div>
<div class="a" style="left:294px;top:1588px;width:10px;height:58px;background:#b4b84e"></div>
<div class="a" style="left:318px;top:1588px;width:10px;height:58px;background:#b4b84e"></div>
<div class="a" style="left:340px;top:1588px;width:10px;height:58px;background:#b4b84e"></div>
<div class="a" style="left:368px;top:1588px;width:92px;height:58px;background:#b4b84e"></div>
<div class="a" style="left:365.7px;top:1506px;width:2px;height:149.5px;background:#ff1a1a"></div>
<svg class="a" style="left:0;top:0;overflow:visible" width="1" height="1"><defs><radialGradient id="sg" cx="0.45" cy="0.35" r="0.75"><stop offset="0" stop-color="#fff6b8"/><stop offset="0.55" stop-color="#fbd84a"/><stop offset="1" stop-color="#f0a81f"/></radialGradient></defs><polygon points="290.00,1507.30 292.92,1512.48 298.75,1513.66 294.72,1518.04 295.41,1523.94 290.00,1521.47 284.59,1523.94 285.28,1518.04 281.25,1513.66 287.08,1512.48" fill="url(#sg)" stroke="#e5a733" stroke-width="2.200" stroke-linejoin="round"/><polygon points="455.50,1507.30 458.42,1512.48 464.25,1513.66 460.22,1518.04 460.91,1523.94 455.50,1521.47 450.09,1523.94 450.78,1518.04 446.75,1513.66 452.58,1512.48" fill="url(#sg)" stroke="#e5a733" stroke-width="2.200" stroke-linejoin="round"/><polygon points="484.00,1507.30 486.92,1512.48 492.75,1513.66 488.72,1518.04 489.41,1523.94 484.00,1521.47 478.59,1523.94 479.28,1518.04 475.25,1513.66 481.08,1512.48" fill="url(#sg)" stroke="#e5a733" stroke-width="2.200" stroke-linejoin="round"/><polygon points="532.00,1507.30 534.92,1512.48 540.75,1513.66 536.72,1518.04 537.41,1523.94 532.00,1521.47 526.59,1523.94 527.28,1518.04 523.25,1513.66 529.08,1512.48" fill="url(#sg)" stroke="#e5a733" stroke-width="2.200" stroke-linejoin="round"/><polygon points="290.00,1581.30 292.92,1586.48 298.75,1587.66 294.72,1592.04 295.41,1597.94 290.00,1595.47 284.59,1597.94 285.28,1592.04 281.25,1587.66 287.08,1586.48" fill="url(#sg)" stroke="#e5a733" stroke-width="2.200" stroke-linejoin="round"/><polygon points="455.50,1581.30 458.42,1586.48 464.25,1587.66 460.22,1592.04 460.91,1597.94 455.50,1595.47 450.09,1597.94 450.78,1592.04 446.75,1587.66 452.58,1586.48" fill="url(#sg)" stroke="#e5a733" stroke-width="2.200" stroke-linejoin="round"/><polygon points="484.00,1581.30 486.92,1586.48 492.75,1587.66 488.72,1592.04 489.41,1597.94 484.00,1595.47 478.59,1597.94 479.28,1592.04 475.25,1587.66 481.08,1586.48" fill="url(#sg)" stroke="#e5a733" stroke-width="2.200" stroke-linejoin="round"/><polygon points="532.00,1581.30 534.92,1586.48 540.75,1587.66 536.72,1592.04 537.41,1597.94 532.00,1595.47 526.59,1597.94 527.28,1592.04 523.25,1587.66 529.08,1586.48" fill="url(#sg)" stroke="#e5a733" stroke-width="2.200" stroke-linejoin="round"/><polygon points="360.7,1506 372.7,1506 366.7,1513" fill="#ff1a1a"/><polygon points="360.7,1655.500 372.7,1655.500 366.7,1648.500" fill="#ff1a1a"/><circle cx="366.700" cy="1579.500" r="5.500" fill="#ff1a1a"/></svg>
<div class="clip" style="left:17px;top:1660px;width:2523px;height:22.500px">
<div class="inp" style="left:287.5px;top:8.5px;width:1663.5px;height:51.5px;"></div>
<div class="btn" style="left:1965.5px;top:8.5px;width:157.5px;height:51.5px;"></div>
<div class="btn" style="left:2137.5px;top:8.5px;width:158.5px;height:51.5px;"></div>
<div class="t" style="left:13px;top:20.5px">Index history:</div>
<div class="t" style="left:294px;top:20.5px">history &#9662;</div>
</div>
<div class="lbl" style="left:982.3px;top:1329px;width:416.7px;height:83.4px;background:#000;font-size:64px;line-height:74.05px;letter-spacing:1.3px;text-indent:-19.7px;-webkit-text-stroke:0.7px #fff">4. SEARCH</div>
</body></html>
